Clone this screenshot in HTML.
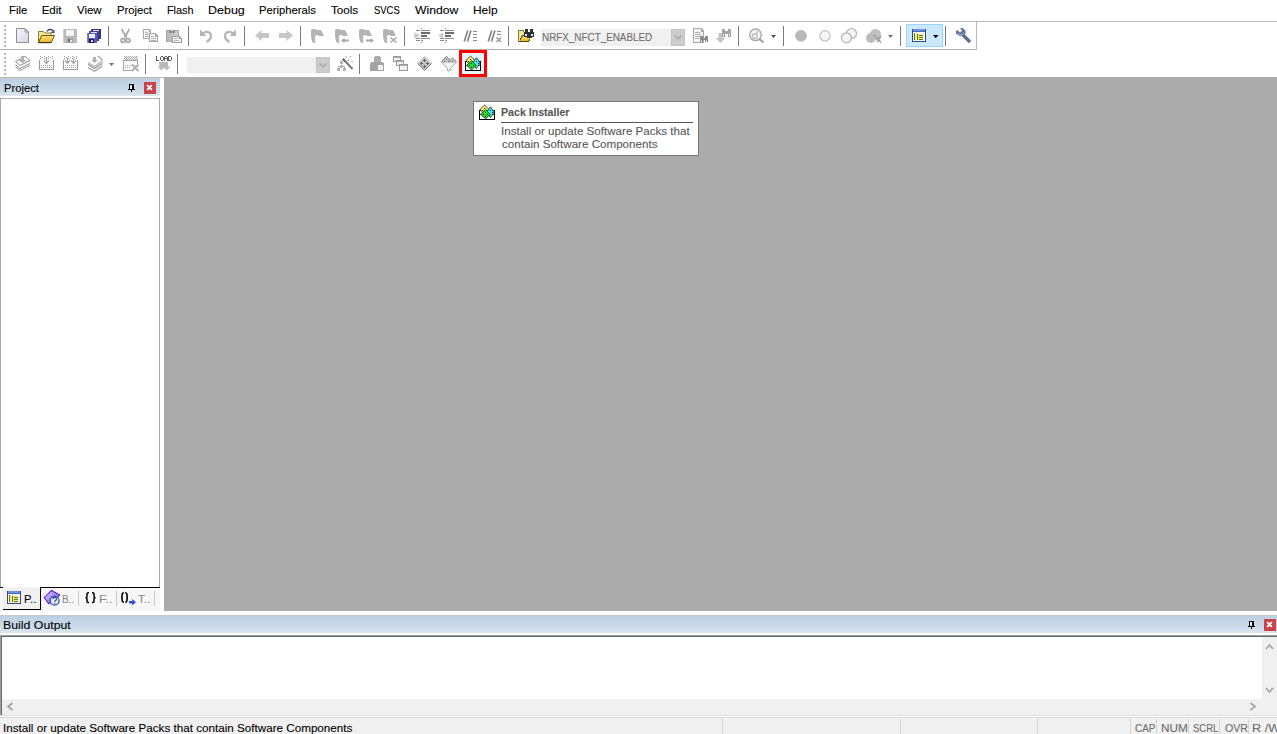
<!DOCTYPE html>
<html><head><meta charset="utf-8">
<style>
*{box-sizing:border-box;margin:0;padding:0}
html,body{width:1277px;height:734px;overflow:hidden;background:#fff}
body{position:relative;font-family:"Liberation Sans",sans-serif;font-size:12px;color:#000}
.a{position:absolute}
.t{position:absolute;white-space:nowrap;line-height:1;transform-origin:0 0;-webkit-text-stroke:0.1px currentColor}
</style></head><body>
<!-- toolbar lines -->
<div class="a" style="left:0;top:21px;width:1277px;height:1px;background:#b9b9b9"></div>
<div class="a" style="left:0;top:49px;width:977px;height:1px;background:#b0b0b0"></div>
<div class="a" style="left:976px;top:21px;width:1px;height:29px;background:#b9b9b9"></div>
<!-- MDI -->
<div class="a" style="left:0;top:77px;width:1277px;height:1px;background:#b9b9b9"></div>
<div class="a" style="left:164px;top:77px;width:1113px;height:534px;background:#ababab"></div>
<!-- project panel -->
<div class="a" style="left:0;top:78px;width:160px;height:18px;background:linear-gradient(#c4cad0 0,#c4cad0 1px,#bcd0e1 1px,#c6d7e7 8px,#d0dfed 15px,#d9e2ea 16px,#dfe5ea 18px)"></div>
<div class="a" style="left:0;top:98px;width:160px;height:490px;border-left:1px solid #a9a9a9;border-top:1px solid #a9a9a9;border-right:1px solid #a9a9a9;background:#fff"></div>
<div class="a" style="left:0;top:587px;width:160px;height:24px;background:#f7f7f7"></div>
<div class="a" style="left:3px;top:588px;width:38px;height:21px;background:#f0f0f0"></div>
<div class="a" style="left:0;top:587px;width:3px;height:1px;background:#000"></div>
<div class="a" style="left:40px;top:587px;width:120px;height:1px;background:#000"></div>
<div class="a" style="left:40px;top:587px;width:1px;height:23px;background:#000"></div>
<div class="a" style="left:3px;top:609px;width:38px;height:1px;background:#000"></div>
<div class="a" style="left:78px;top:591px;width:1px;height:15px;background:#c8c8c8"></div>
<div class="a" style="left:116px;top:591px;width:1px;height:15px;background:#c8c8c8"></div>
<div class="a" style="left:154px;top:591px;width:1px;height:15px;background:#c8c8c8"></div>
<!-- build output -->
<div class="a" style="left:0;top:615px;width:1277px;height:18px;background:linear-gradient(#c4cad0 0,#c4cad0 1px,#bcd0e1 1px,#c6d7e7 8px,#d0dfed 15px,#d9e2ea 16px,#dfe5ea 18px)"></div>
<div class="a" style="left:0;top:635px;width:1277px;height:1px;background:#a0a0a0"></div>
<div class="a" style="left:0;top:635px;width:1px;height:81px;background:#a0a0a0"></div>
<div class="a" style="left:1px;top:636px;width:1276px;height:1px;background:#696969"></div>
<div class="a" style="left:1px;top:636px;width:1px;height:79px;background:#696969"></div>
<div class="a" style="left:1262px;top:637px;width:15px;height:62px;background:#f0f0f0"></div>
<div class="a" style="left:2px;top:699px;width:1275px;height:16px;background:#f0f0f0"></div>
<!-- status bar -->
<div class="a" style="left:0;top:715px;width:1277px;height:1px;background:#dcdcdc"></div>
<div class="a" style="left:0;top:716px;width:1277px;height:1px;background:#fff"></div>
<div class="a" style="left:0;top:717px;width:1277px;height:1px;background:#d9d9d9"></div>
<div class="a" style="left:0;top:718px;width:1277px;height:16px;background:#f0f0f0"></div>
<div class="a" style="left:722px;top:719px;width:1px;height:15px;background:#d5d5d5"></div>
<div class="a" style="left:900px;top:719px;width:1px;height:15px;background:#d5d5d5"></div>
<div class="a" style="left:1037px;top:719px;width:1px;height:15px;background:#d5d5d5"></div>
<div class="a" style="left:1130px;top:719px;width:1px;height:15px;background:#d5d5d5"></div>
<div class="a" style="left:1156px;top:719px;width:1px;height:15px;background:#d5d5d5"></div>
<div class="a" style="left:1188px;top:719px;width:1px;height:15px;background:#d5d5d5"></div>
<div class="a" style="left:1219px;top:719px;width:1px;height:15px;background:#d5d5d5"></div>
<div class="a" style="left:1248px;top:719px;width:1px;height:15px;background:#d5d5d5"></div>
<!-- combo boxes -->
<div class="a" style="left:541px;top:29px;width:144px;height:17px;background:#f0f0f0"></div>
<div class="a" style="left:671px;top:29px;width:14px;height:17px;background:#cccccc;border:1px solid #c4c4c4"></div>
<div class="a" style="left:187px;top:57px;width:143px;height:16px;background:#f0f0f0"></div>
<div class="a" style="left:316px;top:57px;width:14px;height:16px;background:#cccccc;border:1px solid #c4c4c4"></div>
<!-- highlighted button -->
<div class="a" style="left:906px;top:24px;width:37px;height:23px;background:#cce8ff;border:1px solid #99d1ff"></div>
<!-- red box -->
<div class="a" style="left:459px;top:50px;width:28px;height:27px;border:3px solid #ff0000;background:#e5f3ff"></div>
<!-- tooltip -->
<div class="a" style="left:473px;top:101px;width:226px;height:55px;border:1px solid #767676;background:#fff"></div>
<div class="a" style="left:501px;top:122px;width:192px;height:1px;background:#575757"></div>
<!-- pin & close buttons -->
<div class="a" style="left:144px;top:82px;width:12px;height:12px;background:#ca424a"></div>
<div class="a" style="left:1264px;top:619px;width:12px;height:12px;background:#ca424a"></div>

<svg class="a" style="left:0;top:0" width="1277" height="734" viewBox="0 0 1277 734">
<g shape-rendering="crispEdges">
<!-- grips -->
<g fill="#c4c4c4">
<rect x="4" y="25" width="2" height="2"/><rect x="4" y="29" width="2" height="2"/><rect x="4" y="33" width="2" height="2"/><rect x="4" y="37" width="2" height="2"/><rect x="4" y="41" width="2" height="2"/><rect x="4" y="45" width="2" height="2"/>
<rect x="4" y="53" width="2" height="2"/><rect x="4" y="57" width="2" height="2"/><rect x="4" y="61" width="2" height="2"/><rect x="4" y="65" width="2" height="2"/><rect x="4" y="69" width="2" height="2"/><rect x="4" y="73" width="2" height="2"/>
</g>
<g fill="#999">
<rect x="5" y="25" width="1" height="1"/><rect x="5" y="29" width="1" height="1"/><rect x="5" y="33" width="1" height="1"/><rect x="5" y="37" width="1" height="1"/><rect x="5" y="41" width="1" height="1"/><rect x="5" y="45" width="1" height="1"/>
<rect x="5" y="53" width="1" height="1"/><rect x="5" y="57" width="1" height="1"/><rect x="5" y="61" width="1" height="1"/><rect x="5" y="65" width="1" height="1"/><rect x="5" y="69" width="1" height="1"/><rect x="5" y="73" width="1" height="1"/>
</g>
<!-- separators -->
<g fill="#7c7c7c">
<rect x="108" y="26" width="1" height="20"/><rect x="188" y="26" width="1" height="20"/><rect x="244" y="26" width="1" height="20"/><rect x="300" y="26" width="1" height="20"/><rect x="404" y="26" width="1" height="20"/><rect x="508" y="26" width="1" height="20"/><rect x="738" y="26" width="1" height="20"/><rect x="783" y="26" width="1" height="20"/><rect x="900" y="26" width="1" height="20"/><rect x="945" y="26" width="1" height="20"/>
<rect x="145" y="54" width="1" height="20"/><rect x="177" y="54" width="1" height="20"/><rect x="359" y="54" width="1" height="20"/>
</g>

<!-- New file -->
<defs>
<linearGradient id="gdoc" x1="0" y1="0" x2="1" y2="1"><stop offset="0" stop-color="#f4f4fa"/><stop offset="1" stop-color="#d6d8ec"/></linearGradient>
<linearGradient id="gfold" x1="0" y1="0" x2="0" y2="1"><stop offset="0" stop-color="#fde27a"/><stop offset="1" stop-color="#f0b429"/></linearGradient>
<linearGradient id="gclip" x1="0" y1="0" x2="1" y2="0"><stop offset="0" stop-color="#b8b8b8"/><stop offset="1" stop-color="#cfcfcf"/></linearGradient>
</defs>
</g>
<path d="M16.5 28.5h8.5l3.5 3.5v10.5h-12z" fill="url(#gdoc)" stroke="#8e8e8e" stroke-width="1" stroke-linejoin="miter"/>
<path d="M25 28.8v3.2h3.2z" fill="#fff" stroke="#8e8e8e" stroke-width="1"/>
<!-- Open folder -->
<path d="M38.5 42.5V31.5H43.5L44.7 33H51V36H41.7L38.5 42.5z" fill="#f7e79a" stroke="#8c7c3c" stroke-width="1"/>
<path d="M38.5 42.6l3.2-7.1h12.8l-3.2 7.1z" fill="url(#gfold)" stroke="#6a5420" stroke-width="1" stroke-linejoin="round"/>
<path d="M38.5 42.6h12.8" stroke="#3a2a10" stroke-width="1"/>
<path d="M47 31.5Q49 28 53 30.5" fill="none" stroke="#3d4d6d" stroke-width="1.5"/>
<path d="M54.5 29.5v3.5h-4z" fill="#3d4d6d"/>
<g shape-rendering="crispEdges">
<!-- Save (disabled) -->
<rect x="63" y="29" width="14" height="14" fill="#bcbcbc"/>
<rect x="63" y="29" width="1" height="14" fill="#d0d0d0"/>
<rect x="65" y="30" width="10" height="7" fill="#b0b0b0"/>
<rect x="66" y="30" width="8" height="6" fill="#f4f4f4"/>
<rect x="67" y="38" width="6" height="5" fill="#a8a8a8"/>
<rect x="68" y="39" width="2" height="3" fill="#707070"/>
<rect x="70" y="40" width="2" height="2" fill="#e4e4e4"/>
<!-- Save all -->
<rect x="91" y="29" width="10" height="10" fill="#34347a"/>
<rect x="93" y="30" width="6" height="2" fill="#e8e8f8"/>
<rect x="89" y="31" width="10" height="10" fill="#40408e"/>
<rect x="91" y="32" width="6" height="2" fill="#e8e8f8"/>
<rect x="87" y="33" width="10" height="10" fill="#5a5ab8"/>
<rect x="87" y="33" width="1" height="10" fill="#8080d0"/>
<rect x="89" y="34" width="6" height="4" fill="#eef0fc"/>
<rect x="89" y="39" width="5" height="4" fill="#22224a"/>
<rect x="91" y="40" width="2" height="2" fill="#c8d8d8"/>
</g>
<!-- Cut -->
<path d="M121.5 29l5 8.5M129.5 29l-5 8.5" stroke="#acacac" stroke-width="1.8" fill="none"/>
<circle cx="123" cy="40.5" r="2" fill="#e8e8e8" stroke="#a4a4a4" stroke-width="1.6"/>
<circle cx="128" cy="40.5" r="2" fill="#e8e8e8" stroke="#a4a4a4" stroke-width="1.6"/>
<!-- Copy -->
<g shape-rendering="crispEdges">
<path d="M143 29h6l2 2v8h-8z" fill="#a8a8a8"/>
<path d="M144 30h5v2h1v6h-6z" fill="#f4f4f4"/>
<rect x="145" y="32" width="3" height="1" fill="#b4b4b4"/><rect x="145" y="34" width="4" height="1" fill="#b4b4b4"/><rect x="145" y="36" width="4" height="1" fill="#b4b4b4"/>
<path d="M149 33h6l3 3v6h-9z" fill="#a4a4a4"/>
<path d="M150 34h5v3h2v4h-7z" fill="#f6f6f6"/>
<rect x="151" y="36" width="3" height="1" fill="#b4b4b4"/><rect x="151" y="38" width="5" height="1" fill="#b4b4b4"/><rect x="151" y="40" width="5" height="1" fill="#b4b4b4"/>
<!-- Paste -->
<rect x="166" y="30" width="13" height="12" fill="#a8a8a8"/>
<rect x="167" y="31" width="11" height="10" fill="url(#gclip)"/>
<rect x="169" y="30" width="6" height="3" fill="#909090"/>
<rect x="171" y="29" width="2" height="2" fill="#e0e0e0"/>
<path d="M172 36h7l3 3v4h-10z" fill="#9c9c9c"/>
<path d="M173 37h6v2h2v3h-8z" fill="#f4f4f4"/>
<rect x="174" y="38" width="4" height="1" fill="#b8b8b8"/><rect x="174" y="40" width="5" height="1" fill="#b8b8b8"/>
</g>
<!-- Undo / Redo -->
<path d="M202.5 33.5c4-3 8.5-1.5 8.5 2.5s-3 5-4.5 6" fill="none" stroke="#b8b8b8" stroke-width="2.4"/>
<path d="M200 29.5v6.5h6.5z" fill="#b4b4b4"/>
<path d="M233.5 33.5c-4-3-8.5-1.5-8.5 2.5s3 5 4.5 6" fill="none" stroke="#b8b8b8" stroke-width="2.4"/>
<path d="M236 29.5v6.5h-6.5z" fill="#b4b4b4"/>
<!-- back / forward -->
<path d="M255 35.5l6.5-5.5v3h7.5v5h-7.5v3z" fill="#c6c6c6"/>
<path d="M293 35.5l-6.5-5.5v3h-7.5v5h7.5v3z" fill="#c6c6c6"/>
<!-- flags -->
<g fill="#b4b4b4">
<path d="M311 30l2-1h2l2 1h4l1 2l2 4h-5l-2-1.2l-2 1.2v5.5l1 1.2h-3l-1-1.5l-1-5z"/>
<path d="M335 30l2-1h2l2 1h4l1 2l2 4h-5l-2-1.2l-2 1.2v5.5l1 1.2h-3l-1-1.5l-1-5z"/>
<path d="M359 30l2-1h2l2 1h4l1 2l2 4h-5l-2-1.2l-2 1.2v5.5l1 1.2h-3l-1-1.5l-1-5z"/>
<path d="M383 30l2-1h2l2 1h4l1 2l2 4h-5l-2-1.2l-2 1.2v5.5l1 1.2h-3l-1-1.5l-1-5z"/>
</g>
<path d="M341 40.5l3.5-2.5v1.5h4.5v2h-4.5v1.5z" fill="#a8a8a8"/>
<path d="M374 40.5l-3.5-2.5v1.5h-4.5v2h4.5v1.5z" fill="#a8a8a8"/>
<path d="M390.5 37.5l6 5M396.5 37.5l-6 5" stroke="#a8a8a8" stroke-width="1.6"/>
<!-- indent / unindent / comment -->
<g shape-rendering="crispEdges">
<g fill="#8a8a8a">
<rect x="416" y="30" width="4" height="1"/><rect x="421" y="30" width="9" height="1"/>
<rect x="421" y="32" width="9" height="2" fill="#6c6c6c"/><rect x="421" y="35" width="6" height="2" fill="#6c6c6c"/>
<rect x="416" y="38" width="4" height="1"/><rect x="421" y="38" width="9" height="1"/>
<rect x="416" y="40" width="4" height="1"/><rect x="421" y="40" width="2" height="1"/>
<rect x="421" y="28" width="1" height="1"/><rect x="421" y="42" width="1" height="1"/>
</g>
<g fill="#8a8a8a">
<rect x="440" y="30" width="4" height="1"/><rect x="445" y="30" width="9" height="1"/>
<rect x="445" y="32" width="9" height="2" fill="#6c6c6c"/><rect x="445" y="35" width="6" height="2" fill="#6c6c6c"/>
<rect x="440" y="38" width="4" height="1"/><rect x="445" y="38" width="9" height="1"/>
<rect x="440" y="40" width="4" height="1"/><rect x="445" y="40" width="2" height="1"/>
<rect x="445" y="28" width="1" height="1"/><rect x="445" y="42" width="1" height="1"/>
</g>
<g fill="#8a8a8a">
<rect x="473" y="31" width="4" height="1"/><rect x="473" y="34" width="4" height="1"/><rect x="473" y="37" width="4" height="1"/><rect x="473" y="40" width="4" height="1"/>
<rect x="497" y="31" width="4" height="1"/><rect x="497" y="34" width="4" height="1"/>
</g>
</g>
<path d="M420 35.5l-5.5-3.2v6.4z" fill="#c8c8c8"/><path d="M414 35h3v1h-3z" fill="#c8c8c8"/>
<path d="M438 35.5l5-3v6z" fill="#c8c8c8"/>
<path d="M467.8 30.5l-3.6 11M471 30.5l-3.6 11M491.8 30.5l-3.6 11M495 30.5l-3.6 11" stroke="#868686" stroke-width="1.7"/>
<path d="M496.5 37.5l4.5 4.5M501 37.5l-4.5 4.5" stroke="#a0a0a0" stroke-width="1.7"/>
<!-- find in files -->
<g shape-rendering="crispEdges">
<path d="M518 30h6v2h1v10h-7z" fill="#8a7a40"/>
<path d="M519 31h4v1h1v9h-5z" fill="#f4e890"/>
<path d="M522 35h10l-3 7h-10z" fill="#5a4820"/>
</g>
<path d="M522.8 36h8l-2.3 5h-8.5z" fill="url(#gfold)"/>
<g fill="#2a3232" shape-rendering="crispEdges"><rect x="525" y="29" width="3" height="4"/><rect x="530" y="29" width="3" height="4"/><rect x="524" y="32" width="10" height="5"/><rect x="527" y="37" width="5" height="1"/></g>
<g fill="#e0e4f0" shape-rendering="crispEdges"><rect x="525" y="34" width="2" height="2"/><rect x="531" y="34" width="2" height="2"/></g>
<!-- combo arrows -->
<path d="M674.5 35.5l3.5 3.5l3.5-3.5" fill="none" stroke="#a0a0a0" stroke-width="1.2"/>
<path d="M319.5 63.5l3.5 3.5l3.5-3.5" fill="none" stroke="#a0a0a0" stroke-width="1.2"/>
<!-- find doc -->
<g shape-rendering="crispEdges">
<path d="M693 28h8l3 3v12h-11z" fill="#a8a8a8"/>
<path d="M694 29h7v3h2v10h-9z" fill="#f4f4f4"/>
<rect x="695" y="32" width="5" height="1" fill="#b0b0b0"/><rect x="695" y="34" width="6" height="1" fill="#b0b0b0"/><rect x="695" y="36" width="5" height="1" fill="#b0b0b0"/><rect x="695" y="38" width="4" height="1" fill="#b0b0b0"/>
<g fill="#8a8a8a"><rect x="700" y="36" width="3" height="6"/><rect x="705" y="36" width="3" height="6"/><rect x="701" y="38" width="5" height="2"/></g>
<g fill="#d8d8d8"><rect x="701" y="40" width="1" height="2"/><rect x="706" y="40" width="1" height="2"/></g>
</g>
<!-- binocular arrow -->
<path d="M718.5 33h4v5h3l-5 5l-5-5h3z" fill="#c4c4c4"/>
<g fill="#a4a4a4" shape-rendering="crispEdges"><rect x="722" y="29" width="3" height="8"/><rect x="728" y="29" width="3" height="8"/><rect x="723" y="31" width="7" height="3"/></g>
<g fill="#e8e8e8" shape-rendering="crispEdges"><rect x="723" y="34" width="1" height="2"/><rect x="729" y="34" width="1" height="2"/></g>
<!-- debug session -->
<circle cx="755.5" cy="34.8" r="5.8" fill="#f4f4f4" stroke="#a8a8a8" stroke-width="1.4"/>
<path d="M759.5 39l4 3.5" stroke="#a0a0a0" stroke-width="2"/>
<path d="M757 30.5v8M757 38.5h-2.5a2.2 2.2 0 0 1 0-4.5h2.5" fill="none" stroke="#c0c0c0" stroke-width="1.4"/>
<!-- dropdown triangles -->
<path d="M771 35h5l-2.5 3z" fill="#505050"/>
<path d="M888 35h5l-2.5 3z" fill="#707070"/>
<path d="M933 35h5.5l-2.75 3.2z" fill="#000"/>
<path d="M109 63h5l-2.5 3z" fill="#707070"/>
<!-- breakpoints -->
<circle cx="801" cy="35.8" r="5.5" fill="#b8b8b8" stroke="#c4c4c4"/>
<circle cx="825" cy="35.8" r="5.2" fill="#f6f6f6" stroke="#c0c0c0" stroke-width="1.2"/>
<circle cx="851.5" cy="33.5" r="5" fill="#f4f4f4" stroke="#b4b4b4" stroke-width="1.2"/>
<circle cx="846.5" cy="37.8" r="5" fill="#f4f4f4" stroke="#b4b4b4" stroke-width="1.2"/>
<circle cx="875.5" cy="34.5" r="5.5" fill="#c0c0c0"/>
<circle cx="871" cy="38" r="5" fill="#bcbcbc"/>
<path d="M874 35l7 7.5M881 36l-4 6" stroke="#a0a0a0" stroke-width="1.6"/>
<!-- project window icon -->
<g id="pw" shape-rendering="crispEdges">
<rect x="912" y="29" width="14" height="13" fill="#34497a"/>
<rect x="913" y="29" width="12" height="2" fill="#6a8ee8"/>
<rect x="913" y="31" width="12" height="1" fill="#4a6cc0"/>
<rect x="913" y="32" width="12" height="9" fill="#f2f8f4"/>
<rect x="914" y="33" width="1" height="7" fill="#6a7420"/>
<rect x="915" y="33" width="2" height="7" fill="#eef290"/>
<rect x="917" y="34" width="1" height="6" fill="#6a7420"/>
<rect x="918" y="34" width="5" height="6" fill="#e6ee80"/>
<rect x="919" y="35" width="4" height="1" fill="#6a7420"/><rect x="919" y="37" width="4" height="1" fill="#6a7420"/><rect x="919" y="39" width="4" height="1" fill="#6a7420"/>
</g>
<!-- wrench -->
<path d="M962 34l8 8" stroke="#5d6f90" stroke-width="3.4" stroke-linecap="butt"/>
<path d="M956 30.5h2l2 2l2-2l-2-2.5h2.5l3 2.5v3l-2.5 2.5h-3.5l-3.5-2.5z" fill="#66799a"/>
<path d="M958 33.5l2 1.5h2l2-2" fill="none" stroke="#a8b8d0" stroke-width="1"/>

<!-- toolbar 2 -->
<!-- translate stacked -->
<g fill="none" stroke="#8c8c8c" stroke-width="1">
<path d="M15.5 61.5l10-5l4.5 4l-10 5z"/>
<path d="M15.5 64.5l4.5 4l10-5"/>
<path d="M15.5 66.5l4.5 4l10-5"/>
</g>
<path d="M21 56h3v4h2.5l-4 3.5l-4-3.5h2.5z" fill="#b4b4b4"/>
<!-- build target -->
<g shape-rendering="crispEdges" fill="#9a9a9a">
<rect x="39" y="60" width="1" height="10"/><rect x="53" y="60" width="1" height="10"/><rect x="39" y="69" width="15" height="1"/>
<rect x="41" y="65" width="1" height="1"/><rect x="43" y="65" width="1" height="1"/><rect x="45" y="65" width="1" height="1"/><rect x="47" y="65" width="1" height="1"/><rect x="49" y="65" width="1" height="1"/><rect x="51" y="65" width="1" height="1"/>
<rect x="41" y="67" width="1" height="1"/><rect x="43" y="67" width="1" height="1"/><rect x="45" y="67" width="1" height="1"/><rect x="47" y="67" width="1" height="1"/><rect x="49" y="67" width="1" height="1"/><rect x="51" y="67" width="1" height="1"/>
<rect x="40" y="56" width="1" height="1"/><rect x="44" y="56" width="1" height="1"/><rect x="48" y="56" width="1" height="1"/><rect x="52" y="56" width="1" height="1"/>
<rect x="42" y="57" width="1" height="1"/><rect x="46" y="57" width="1" height="1"/><rect x="50" y="57" width="1" height="1"/>
<rect x="40" y="58" width="1" height="1"/><rect x="44" y="58" width="1" height="1"/><rect x="48" y="58" width="1" height="1"/><rect x="52" y="58" width="1" height="1"/>
</g>
<path d="M46.5 58v5M44 60.5l2.5 3l2.5-3" fill="none" stroke="#a8a8a8" stroke-width="1.2"/>
<!-- rebuild -->
<g shape-rendering="crispEdges" fill="#9a9a9a">
<rect x="63" y="60" width="1" height="10"/><rect x="77" y="60" width="1" height="10"/><rect x="63" y="69" width="15" height="1"/>
<rect x="65" y="65" width="1" height="1"/><rect x="67" y="65" width="1" height="1"/><rect x="69" y="65" width="1" height="1"/><rect x="71" y="65" width="1" height="1"/><rect x="73" y="65" width="1" height="1"/><rect x="75" y="65" width="1" height="1"/>
<rect x="65" y="67" width="1" height="1"/><rect x="67" y="67" width="1" height="1"/><rect x="69" y="67" width="1" height="1"/><rect x="71" y="67" width="1" height="1"/><rect x="73" y="67" width="1" height="1"/><rect x="75" y="67" width="1" height="1"/>
<rect x="64" y="56" width="1" height="1"/><rect x="68" y="56" width="1" height="1"/><rect x="72" y="56" width="1" height="1"/><rect x="76" y="56" width="1" height="1"/>
<rect x="66" y="57" width="1" height="1"/><rect x="70" y="57" width="1" height="1"/><rect x="74" y="57" width="1" height="1"/>
<rect x="64" y="58" width="1" height="1"/><rect x="68" y="58" width="1" height="1"/><rect x="72" y="58" width="1" height="1"/><rect x="76" y="58" width="1" height="1"/>
</g>
<path d="M67.5 58v5M65 60.5l2.5 3l2.5-3M73.5 58v5M71 60.5l2.5 3l2.5-3" fill="none" stroke="#a8a8a8" stroke-width="1.2"/>
<!-- batch build -->
<path d="M88 61.5l6.5 4l8-6v3l-8 6l-6.5-4z" fill="#c8c8c8"/>
<path d="M88 64.5l6.5 4l8-5M88 67.5l6.5 3.5l8-5M98 56l4.5 4" fill="none" stroke="#a0a0a0" stroke-width="1.1"/>
<path d="M88 67.5l6.5 3.5l8-5v1l-8 5l-6.5-3.5z" fill="#bcbcbc"/>
<path d="M93 57h3v3h2l-3.5 3l-3.5-3h2z" fill="#b0b0b0"/>
<!-- stop build -->
<g shape-rendering="crispEdges" fill="#a4a4a4">
<rect x="124" y="56" width="1" height="1"/><rect x="126" y="56" width="1" height="1"/><rect x="128" y="56" width="1" height="1"/><rect x="130" y="56" width="1" height="1"/><rect x="132" y="56" width="1" height="1"/><rect x="134" y="56" width="1" height="1"/><rect x="136" y="56" width="1" height="1"/><rect x="125" y="57" width="1" height="1"/><rect x="127" y="57" width="1" height="1"/><rect x="129" y="57" width="1" height="1"/><rect x="131" y="57" width="1" height="1"/><rect x="133" y="57" width="1" height="1"/><rect x="135" y="57" width="1" height="1"/><rect x="137" y="57" width="1" height="1"/><rect x="124" y="58" width="1" height="1"/><rect x="126" y="58" width="1" height="1"/><rect x="128" y="58" width="1" height="1"/><rect x="130" y="58" width="1" height="1"/><rect x="132" y="58" width="1" height="1"/><rect x="134" y="58" width="1" height="1"/><rect x="136" y="58" width="1" height="1"/><rect x="125" y="59" width="1" height="1"/><rect x="127" y="59" width="1" height="1"/><rect x="129" y="59" width="1" height="1"/><rect x="131" y="59" width="1" height="1"/><rect x="133" y="59" width="1" height="1"/><rect x="135" y="59" width="1" height="1"/><rect x="137" y="59" width="1" height="1"/>
<rect x="123" y="60" width="1" height="11"/><rect x="123" y="70" width="9" height="1"/><rect x="123" y="60" width="15" height="1"/><rect x="137" y="60" width="1" height="4"/>
<rect x="125" y="65" width="1" height="1"/><rect x="127" y="65" width="1" height="1"/><rect x="129" y="65" width="1" height="1"/><rect x="131" y="65" width="1" height="1"/>
<rect x="125" y="67" width="1" height="1"/><rect x="127" y="67" width="1" height="1"/><rect x="129" y="67" width="1" height="1"/>
</g>
<path d="M132 64.5l6.5 6.5M138.5 64.5l-6.5 6.5" stroke="#b0b0b0" stroke-width="2"/>
<!-- LOAD -->
<g fill="#5c5c5c" shape-rendering="crispEdges">
<rect x="156" y="56" width="1" height="5"/><rect x="157" y="60" width="2" height="1"/>
<rect x="160" y="57" width="1" height="3"/><rect x="163" y="57" width="1" height="3"/><rect x="161" y="56" width="2" height="1"/><rect x="161" y="60" width="2" height="1"/>
<rect x="164" y="57" width="1" height="4"/><rect x="167" y="57" width="1" height="4"/><rect x="165" y="56" width="2" height="1"/><rect x="165" y="58" width="2" height="1"/>
<rect x="168" y="56" width="1" height="5"/><rect x="169" y="56" width="2" height="1"/><rect x="169" y="60" width="2" height="1"/><rect x="171" y="57" width="1" height="3"/>
</g>
<path d="M159 62h9v4.5h2.5l-4 4l-2.5-3l-2.5 3l-4-4h2z" fill="#b8b8b8"/>
<!-- wand -->
<g shape-rendering="crispEdges" fill="#b4b4b4">
<rect x="340" y="61" width="3" height="3"/>
<rect x="337" y="68" width="3" height="3"/><rect x="343" y="68" width="3" height="3"/>
<rect x="338" y="66" width="1" height="2"/><rect x="344" y="66" width="1" height="2"/><rect x="338" y="66" width="7" height="1"/>
</g>
<path d="M341.5 64.5l2 2l-2 2l-2-2z" fill="#a8a8a8"/>
<path d="M343 59l9.5 10" stroke="#787878" stroke-width="2"/>
<path d="M343 59l2.2 2.3" stroke="#505050" stroke-width="2.2" stroke-dasharray="0.8 0.6"/>
<g fill="#a4a4a4">
<path d="M345 57.3l2-1v2z"/><path d="M349 56.6l2.2-0.6v1.6z"/><path d="M347 60.6l2-1v2z"/><path d="M351 61.6l1.6-1.2v2.4z"/>
</g>
<!-- select device -->
<g shape-rendering="crispEdges">
<rect x="374" y="57" width="7" height="5" fill="#acacac"/>
<rect x="375" y="56" width="5" height="1" fill="#acacac"/>
<rect x="370" y="63" width="14" height="8" fill="#a4a4a4"/>
<rect x="371" y="62" width="12" height="1" fill="#a4a4a4"/>
<rect x="378" y="65" width="5" height="5" fill="#f0f0f0"/>
</g>
<!-- windows -->
<g shape-rendering="crispEdges" fill="#f0f0f0" stroke="#9a9a9a">
<rect x="393.5" y="56.5" width="7" height="5"/>
<rect x="396.5" y="60.5" width="7" height="5"/>
<rect x="399.5" y="64.5" width="8" height="6"/>
</g>
<g shape-rendering="crispEdges" fill="#b0b0b0"><rect x="394" y="57" width="6" height="1"/><rect x="397" y="61" width="6" height="1"/><rect x="400" y="65" width="7" height="1"/></g>
<!-- diamond -->
<path d="M424.5 56l7.3 7.4l-7.3 7.4l-7.3-7.4z" fill="#c4c4c4"/>
<path d="M417.5 63.5l7 7l7-7" fill="none" stroke="#7a7a7a" stroke-width="1"/>
<g fill="#606060" shape-rendering="crispEdges">
<rect x="424" y="59" width="1" height="3"/><rect x="423" y="60" width="3" height="1"/>
<rect x="421" y="62" width="1" height="3"/><rect x="420" y="63" width="3" height="1"/>
<rect x="427" y="62" width="1" height="3"/><rect x="426" y="63" width="3" height="1"/>
<rect x="424" y="65" width="1" height="3"/><rect x="423" y="66" width="3" height="1"/>
</g>
<!-- funnel -->
<path d="M441.5 61.8l5-5.5l3.5 4l2.5-2.3l4 3.8z" fill="#c8c8c8"/>
<path d="M441.5 61.8l5-5.5l3.5 4l2.5-2.3l4 3.8" fill="none" stroke="#7a7a7a" stroke-width="1"/>
<path d="M441.5 62l6 6.5v2.3h3v-2.3l6-6.5z" fill="#f2f2f4" stroke="#a8a8a8" stroke-width="1"/>
<g fill="#707070" shape-rendering="crispEdges"><rect x="446" y="59" width="1" height="1"/><rect x="444" y="61" width="1" height="1"/><rect x="448" y="61" width="2" height="1"/><rect x="452" y="61" width="1" height="1"/></g>
<!-- pack installer icon in red box -->
<g id="pk">
<g shape-rendering="crispEdges">
<rect x="465" y="61" width="16" height="10" fill="#000"/>
<rect x="466" y="62" width="14" height="8" fill="#fff"/>
<rect x="466" y="65" width="14" height="1" fill="#000" fill-opacity="0.7"/>
</g>
<path d="M470.5 56l4.6 4.6l-4.6 4.6l-4.6-4.6z" fill="#f2f26a" stroke="#000" stroke-width="0.9" stroke-opacity="0.75"/>
<path d="M476.4 57.8l3.9 5.2l-3.9 5.6l-3.9-5.6z" fill="#34eef4" stroke="#000" stroke-width="0.9" stroke-opacity="0.75"/>
<path d="M471.5 60.6l4.7 4.7l-4.7 4.7l-4.7-4.7z" fill="#22e022" stroke="#000" stroke-width="0.9" stroke-opacity="0.75"/>
<g fill="#000" shape-rendering="crispEdges"><rect x="471" y="63" width="1" height="1"/><rect x="469" y="65" width="1" height="1"/><rect x="473" y="65" width="1" height="1"/><rect x="471" y="67" width="1" height="1"/>
<rect x="470" y="59" width="1" height="1"/><rect x="468" y="61" width="1" height="1"/><rect x="476" y="61" width="1" height="1"/><rect x="478" y="63" width="1" height="1"/></g>
</g>
<!-- tooltip icon -->
<use href="#pk" transform="translate(14 49)"/>

<!-- pins -->
<g shape-rendering="crispEdges" fill="#000">
<rect x="129" y="84" width="5" height="6"/><rect x="128" y="89" width="7" height="1"/><rect x="131" y="90" width="1" height="2"/>
<rect x="1249" y="621" width="5" height="6"/><rect x="1248" y="626" width="7" height="1"/><rect x="1251" y="627" width="1" height="2"/>
</g>
<g shape-rendering="crispEdges" fill="#f0f4f8">
<rect x="130" y="85" width="2" height="4"/>
<rect x="1250" y="622" width="2" height="4"/>
</g>
<!-- close X -->
<path d="M147.2 85.2l4.6 4.6M151.8 85.2l-4.6 4.6" stroke="#fff" stroke-width="1.9"/>
<path d="M1267.2 622.2l4.6 4.6M1271.8 622.2l-4.6 4.6" stroke="#fff" stroke-width="1.9"/>

<!-- tab icons -->
<use href="#pw" transform="translate(-905 562)"/>
<defs><linearGradient id="gbook" x1="0" y1="0" x2="1" y2="1"><stop offset="0" stop-color="#c8a8f8"/><stop offset="1" stop-color="#7a78e0"/></linearGradient></defs>
<path d="M51.5 590.5L59.6 595L54 601.5L48.5 603.5L44.3 597.5z" fill="url(#gbook)" stroke="#5a1ed8" stroke-width="1.1"/>
<path d="M45.6 597.2L51.4 591.8M46.6 599.2L52.2 593.4" fill="none" stroke="#f4f0ff" stroke-width="0.9" stroke-dasharray="1 1"/>
<circle cx="54.6" cy="600.8" r="4.4" fill="#e8f0fc" stroke="#2e4aa8" stroke-width="1.3"/>
<path d="M53 599.2q0-1.8 1.7-1.8q1.8 0 1.8 1.6q0 1-1.1 1.5q-0.7 0.3-0.7 1.2" fill="none" stroke="#2a4a9a" stroke-width="1.2"/>
<rect x="54.1" y="602.6" width="1.2" height="1.2" fill="#2a4a9a"/>
<path d="M89 592.8h-0.8q-1.2 0-1.2 1.3v2.6q0 1-1.6 1q1.6 0 1.6 1v2.6q0 1.3 1.2 1.3h0.8" fill="none" stroke="#000" stroke-width="1.5"/>
<path d="M92 592.8h0.8q1.2 0 1.2 1.3v2.6q0 1 1.6 1q-1.6 0-1.6 1v2.6q0 1.3-1.2 1.3h-0.8" fill="none" stroke="#000" stroke-width="1.5"/>
<path d="M123.8 592.6q-1.8 0.6-1.8 2.6v4.6q0 2 1.8 2.6" fill="none" stroke="#000" stroke-width="1.6"/>
<path d="M125.3 592.6q1.8 0.6 1.8 2.6v4.6q0 2-1.8 2.6" fill="none" stroke="#000" stroke-width="1.6"/>
<path d="M129 601h3.2v-2l3.8 3.3l-3.8 3.3v-2h-3.2z" fill="#3050d0"/>

<!-- scroll chevrons -->
<g fill="none" stroke="#a6a6a6" stroke-width="1.8">
<path d="M1266 649l3.5-4l3.5 4"/>
<path d="M1266 688l3.5 4l3.5-4"/>
<path d="M1250.5 703l4.5 3.5l-4.5 3.5"/>
<path d="M12.5 703l-4.5 3.5l4.5 3.5"/>
</g>

</svg>
<div class="t" style="left:8.62px;top:5px;font-size:11.5px;font-weight:400;color:#000;transform:scaleX(0.9824)">File</div>
<div class="t" style="left:41.70px;top:5px;font-size:11.5px;font-weight:400;color:#000;transform:scaleX(1.0000)">Edit</div>
<div class="t" style="left:76.90px;top:5px;font-size:11.5px;font-weight:400;color:#000;transform:scaleX(0.9960)">View</div>
<div class="t" style="left:116.52px;top:5px;font-size:11.5px;font-weight:400;color:#000;transform:scaleX(0.9771)">Project</div>
<div class="t" style="left:167.06px;top:5px;font-size:11.5px;font-weight:400;color:#000;transform:scaleX(0.9407)">Flash</div>
<div class="t" style="left:207.92px;top:5px;font-size:11.5px;font-weight:400;color:#000;transform:scaleX(1.0844)">Debug</div>
<div class="t" style="left:259.02px;top:5px;font-size:11.5px;font-weight:400;color:#000;transform:scaleX(0.9772)">Peripherals</div>
<div class="t" style="left:331.00px;top:5px;font-size:11.5px;font-weight:400;color:#000;transform:scaleX(1.0115)">Tools</div>
<div class="t" style="left:374.18px;top:5px;font-size:11.5px;font-weight:400;color:#000;transform:scaleX(0.8200)">SVCS</div>
<div class="t" style="left:415.40px;top:5px;font-size:11.5px;font-weight:400;color:#000;transform:scaleX(1.0610)">Window</div>
<div class="t" style="left:473.16px;top:5px;font-size:11.5px;font-weight:400;color:#000;transform:scaleX(1.0364)">Help</div>
<div class="t" style="left:542.34px;top:32px;font-size:11.5px;font-weight:400;color:#6d6d6d;transform:scaleX(0.8583)">NRFX_NFCT_ENABLED</div>
<div class="t" style="left:3.73px;top:83px;font-size:11.5px;font-weight:400;color:#000;transform:scaleX(0.9743)">Project</div>
<div class="t" style="left:3.33px;top:620px;font-size:11.5px;font-weight:400;color:#000;transform:scaleX(1.0710)">Build Output</div>
<div class="t" style="left:500.68px;top:107px;font-size:11.5px;font-weight:700;color:#575757;transform:scaleX(0.9233)">Pack Installer</div>
<div class="t" style="left:500.59px;top:126px;font-size:11.5px;font-weight:400;color:#575757;transform:scaleX(1.0070)">Install or update Software Packs that</div>
<div class="t" style="left:501.60px;top:139px;font-size:11.5px;font-weight:400;color:#575757;transform:scaleX(1.0091)">contain Software Components</div>
<div class="t" style="left:23.73px;top:594px;font-size:11.5px;font-weight:400;color:#000;transform:scaleX(0.9727)">P..</div>
<div class="t" style="left:61.84px;top:594px;font-size:11.5px;font-weight:400;color:#8a8a8a;transform:scaleX(0.8583)">B..</div>
<div class="t" style="left:99.30px;top:594px;font-size:11.5px;font-weight:400;color:#8a8a8a;transform:scaleX(1.1000)">F..</div>
<div class="t" style="left:138.00px;top:594px;font-size:11.5px;font-weight:400;color:#8a8a8a;transform:scaleX(1.0000)">T..</div>
<div class="t" style="left:3.49px;top:723px;font-size:11.5px;font-weight:400;color:#000;transform:scaleX(1.0140)">Install or update Software Packs that contain Software Components</div>
<div class="t" style="left:1135.14px;top:723px;font-size:11.5px;font-weight:400;color:#6d6d6d;transform:scaleX(0.8636)">CAP</div>
<div class="t" style="left:1160.77px;top:723px;font-size:11.5px;font-weight:400;color:#6d6d6d;transform:scaleX(1.0250)">NUM</div>
<div class="t" style="left:1192.98px;top:723px;font-size:11.5px;font-weight:400;color:#6d6d6d;transform:scaleX(0.8241)">SCRL</div>
<div class="t" style="left:1224.50px;top:723px;font-size:11.5px;font-weight:400;color:#6d6d6d;transform:scaleX(0.9208)">OVR</div>
<div class="t" style="left:1252.30px;top:723px;font-size:11.5px;font-weight:400;color:#6d6d6d;transform:scaleX(1.1040)">R /W</div>
</body></html>
